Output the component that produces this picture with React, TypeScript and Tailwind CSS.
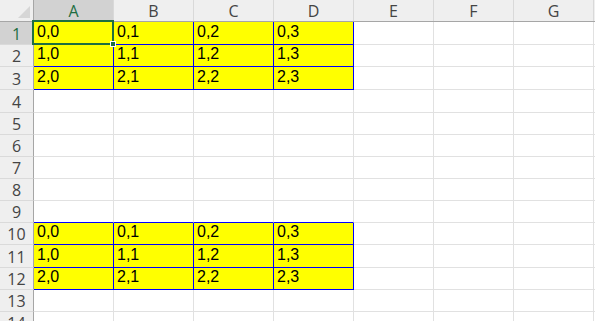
const cols = ["A", "B", "C", "D", "E", "F", "G"];

// row heights in px, bottom gridline included
const rowHeights = [23, 22, 23, 23, 22, 22, 22, 22, 22, 22, 23, 22, 22, 22, 22];

const blockRows: Record<number, number> = { 1: 0, 2: 1, 3: 2, 10: 0, 11: 1, 12: 2 };

const isFilled = (row: number, col: number) => row in blockRows && col < 4;

const Cell = ({ row, col }: { row: number; col: number }) => {
  const filled = isFilled(row, col);
  const aboveBlock = !filled && isFilled(row + 1, col);
  const selected = row === 1 && col === 0;

  let look = "bg-white border-[#e1e1e1]";
  if (filled) look = "bg-[#ffff00] border-[#0000ff]";
  else if (aboveBlock) look = "bg-white border-[#e1e1e1] border-b-[#0000ff]";

  return (
    <div
      className={
        "relative w-[80px] shrink-0 border-r border-b flex items-end pl-[3px] pb-[2px] text-[16px] leading-[20px] text-black " +
        look
      }
      style={{ fontFamily: '"Liberation Sans", Arial, sans-serif' }}
    >
      {filled && `${blockRows[row]},${col}`}
      {selected && (
        <div className="absolute -left-[2px] -top-[2px] w-[82px] h-[25px] border-2 border-[#1e6e42] z-10">
          <div className="absolute -right-[4px] -bottom-[4px] w-[6px] h-[6px] bg-[#1e6e42] border border-white" />
        </div>
      )}
    </div>
  );
};

export default function App() {
  return (
    <div
      className="w-[595px] h-[321px] overflow-hidden bg-white"
      style={{ fontFamily: '"Open Sans", "Noto Sans", sans-serif' }}
    >
      {/* column header */}
      <div className="flex h-[22px] bg-[#efefef] border-b border-[#a6a6a6]">
        <div className="relative w-[34px] shrink-0 border-r border-[#a6a6a6]">
          <svg className="absolute right-[3px] bottom-[3px]" width="12" height="12" viewBox="0 0 12 12">
            <polygon points="12,0 12,12 0,12" fill="#d6d6d6" />
          </svg>
        </div>
        {cols.map((c, i) => (
          <div
            key={c}
            className={
              "w-[80px] shrink-0 border-r border-[#d9d9d9] flex items-center justify-center text-[16px] leading-none pt-[1px] " +
              (i === 0 ? "bg-[#d2d2d2] text-[#1e6e42]" : "text-[#444444]")
            }
          >
            {c}
          </div>
        ))}
        <div className="flex-1" />
      </div>

      {rowHeights.map((h, idx) => {
        const row = idx + 1;
        return (
          <div key={row} className="flex" style={{ height: h }}>
            <div
              className={
                "w-[34px] shrink-0 border-r border-b border-[#dadada] border-r-[#a6a6a6] flex items-center justify-center text-[16px] leading-none pt-[1px] " +
                (row === 1 ? "bg-[#d2d2d2] text-[#1e6e42]" : "bg-[#efefef] text-[#444444]")
              }
            >
              {row}
            </div>
            {cols.map((c, col) => (
              <Cell key={c} row={row} col={col} />
            ))}
            <div className="flex-1 border-b border-[#e1e1e1]" />
          </div>
        );
      })}
    </div>
  );
}
